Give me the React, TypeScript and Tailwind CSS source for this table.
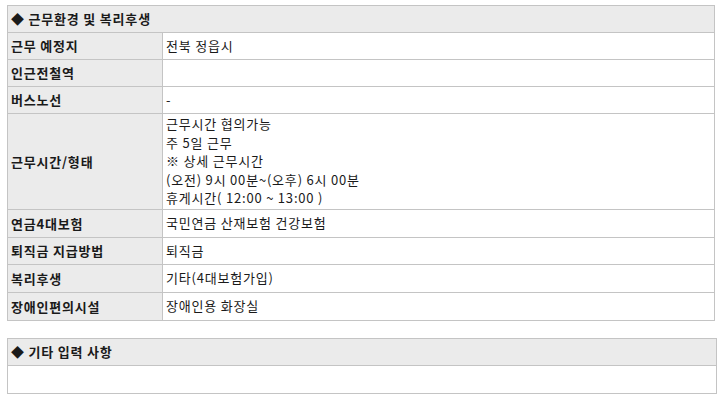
const font = { fontFamily: '"Noto Sans CJK KR", "Noto Sans", sans-serif' };

type Row = { label: string; value: string[]; h: string };

const rows: Row[] = [
  { label: '근무 예정지', value: ['전북 정읍시'], h: 'h-[27px]' },
  { label: '인근전철역', value: [], h: 'h-[27px]' },
  { label: '버스노선', value: ['-'], h: 'h-[27px]' },
  {
    label: '근무시간/형태',
    value: [
      '근무시간 협의가능',
      '주 5일 근무',
      '※ 상세 근무시간',
      '(오전) 9시 00분~(오후) 6시 00분',
      '휴게시간( 12:00 ~ 13:00 )',
    ],
    h: 'h-[96px]',
  },
  { label: '연금4대보험', value: ['국민연금 산재보험 건강보험'], h: 'h-[28px]' },
  { label: '퇴직금 지급방법', value: ['퇴직금'], h: 'h-[27px]' },
  { label: '복리후생', value: ['기타(4대보험가입)'], h: 'h-[28px]' },
  { label: '장애인편의시설', value: ['장애인용 화장실'], h: 'h-[28px]' },
];

export default function App() {
  return (
    <div className="bg-white text-[13px] tracking-[0.8px] text-[#1a1a1a] pt-[5px] pl-[7px]" style={font}>
      <table className="w-[708px] border-collapse">
        <thead>
          <tr>
            <th
              colSpan={2}
              className="h-[27px] border border-[#c4c4c4] bg-[#ebebeb] px-[3px] text-left font-bold leading-[18px]"
            >
              ◆ 근무환경 및 복리후생
            </th>
          </tr>
        </thead>
        <tbody>
          {rows.map((r) => (
            <tr key={r.label} className={r.h}>
              <td className="w-[155px] border border-[#c4c4c4] bg-[#ebebeb] px-[3px] font-bold leading-[18px]">
                {r.label}
              </td>
              <td className="border border-[#c4c4c4] px-[3px] leading-[18.4px]">
                {r.value.map((v, i) => (
                  <div key={i}>{v}</div>
                ))}
              </td>
            </tr>
          ))}
        </tbody>
      </table>

      <table className="mt-[17px] w-[710px] border-collapse">
        <thead>
          <tr>
            <th className="h-[27px] border border-[#c4c4c4] bg-[#ebebeb] px-[3px] text-left font-bold leading-[18px]">
              ◆ 기타 입력 사항
            </th>
          </tr>
        </thead>
        <tbody>
          <tr>
            <td className="h-[28px] border border-[#c4c4c4]"></td>
          </tr>
        </tbody>
      </table>
    </div>
  );
}
